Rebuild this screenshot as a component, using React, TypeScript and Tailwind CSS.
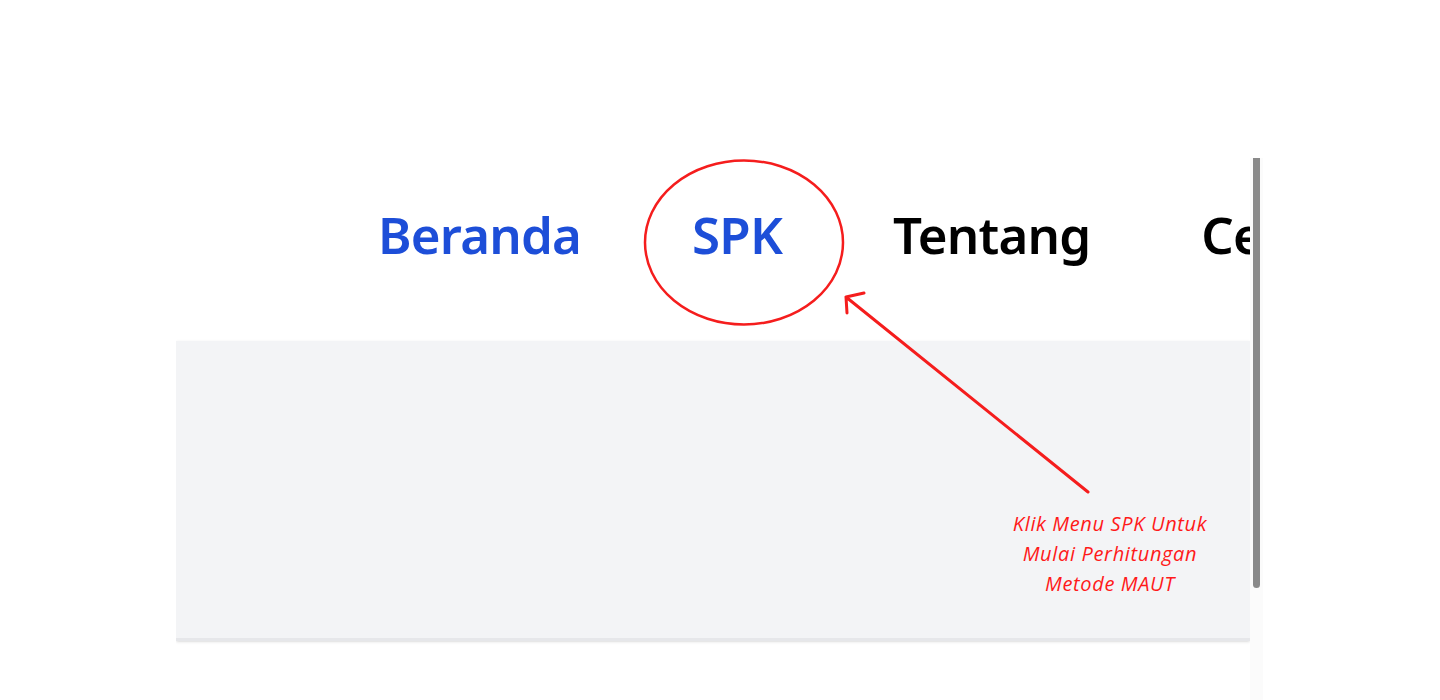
import React from "react";

export default function App() {
  return (
    <div className="relative h-[700px] w-full overflow-hidden bg-white">
      <div className="flex h-full pl-[176px] pt-[158px]">
        <div className="w-[1074px] shrink-0 overflow-hidden">
          <nav
            className="flex h-[183px] items-center gap-[111px] whitespace-nowrap pb-[30px] pl-[202px] text-[51px] font-semibold leading-none tracking-[-0.8px]"
            style={{ fontFamily: '"Noto Sans", "Open Sans", sans-serif' }}
          >
            <a className="text-[#1d4ed8]">Beranda</a>
            <a className="text-[#1d4ed8]">SPK</a>
            <a className="text-black">Tentang</a>
            <a className="text-black">Cetak</a>
          </nav>
          <div className="h-[300px] border-b-[3px] border-[#e6e7ea] bg-[#f3f4f6] shadow-sm" />
        </div>
        <div className="relative w-[13px] shrink-0 bg-[#fbfbfb]">
          <div className="ml-[3px] h-[430px] w-[7px] rounded-b-full bg-[#8a8a8a]" />
        </div>
      </div>

      <svg
        className="pointer-events-none absolute left-0 top-0"
        width="1440"
        height="700"
        viewBox="0 0 1440 700"
      >
        <ellipse cx="744" cy="242.5" rx="99" ry="82" fill="none" stroke="#f51d1d" strokeWidth="2.5" />
        <path
          d="M1088 492 L846 297 M846 297 L864 293 M846 297 L847 313"
          fill="none"
          stroke="#f51d1d"
          strokeWidth="3"
          strokeLinecap="round"
          strokeLinejoin="round"
        />
      </svg>

      <div
        className="absolute left-[980px] top-[509px] w-[260px] text-center text-[20px] italic leading-[30px] tracking-[0.65px] text-[#ff1a1a]"
        style={{ fontFamily: '"Open Sans", "Noto Sans", sans-serif' }}
      >
        Klik Menu SPK Untuk
        <br />
        Mulai Perhitungan
        <br />
        Metode MAUT
      </div>
    </div>
  );
}
